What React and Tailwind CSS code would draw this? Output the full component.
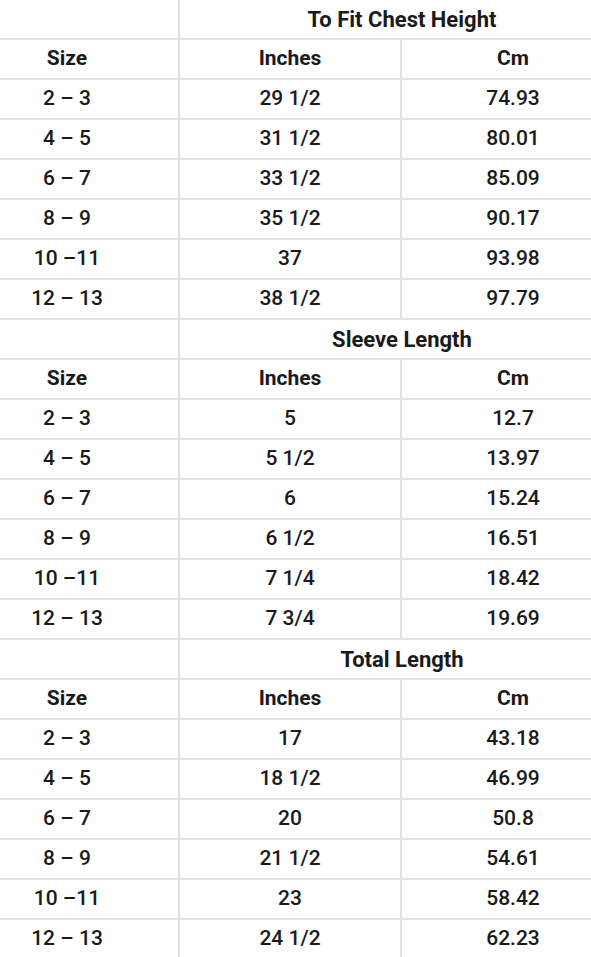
const sections = [
  {
    title: "To Fit Chest Height",
    rows: [
      ["2 – 3", "29 1/2", "74.93"],
      ["4 – 5", "31 1/2", "80.01"],
      ["6 – 7", "33 1/2", "85.09"],
      ["8 – 9", "35 1/2", "90.17"],
      ["10 –11", "37", "93.98"],
      ["12 – 13", "38 1/2", "97.79"],
    ],
  },
  {
    title: "Sleeve Length",
    rows: [
      ["2 – 3", "5", "12.7"],
      ["4 – 5", "5 1/2", "13.97"],
      ["6 – 7", "6", "15.24"],
      ["8 – 9", "6 1/2", "16.51"],
      ["10 –11", "7 1/4", "18.42"],
      ["12 – 13", "7 3/4", "19.69"],
    ],
  },
  {
    title: "Total Length",
    rows: [
      ["2 – 3", "17", "43.18"],
      ["4 – 5", "18 1/2", "46.99"],
      ["6 – 7", "20", "50.8"],
      ["8 – 9", "21 1/2", "54.61"],
      ["10 –11", "23", "58.42"],
      ["12 – 13", "24 1/2", "62.23"],
    ],
  },
];

function Row({ cells, bold }) {
  return (
    <div className={`flex h-[40px] border-b-2 border-[#e2e2e2] ${bold ? "font-bold text-[21px]" : "font-medium"}`}>
      <div className="w-[224px] shrink-0 border-r-2 border-[#e2e2e2] flex items-center justify-center">{cells[0]}</div>
      <div className="w-[222px] shrink-0 border-r-2 border-[#e2e2e2] flex items-center justify-center">{cells[1]}</div>
      <div className="w-[222px] shrink-0 flex items-center justify-center">{cells[2]}</div>
    </div>
  );
}

export default function App() {
  return (
    <div className="w-[591px] h-[957px] overflow-hidden bg-white text-[#1a1a1a] text-[21px]" style={{ fontFamily: "Roboto, 'Noto Sans', sans-serif" }}>
      <div className="ml-[-44px] w-[668px]">
        {sections.map((s) => (
          <div key={s.title}>
            {/* group title */}
            <div className="flex h-[40px] border-b-2 border-[#e2e2e2] font-bold text-[22px]">
              <div className="w-[224px] shrink-0 border-r-2 border-[#e2e2e2]" />
              <div className="w-[444px] shrink-0 flex items-center justify-center">{s.title}</div>
            </div>
            <Row cells={["Size", "Inches", "Cm"]} bold />
            {s.rows.map((r) => (
              <Row key={r[0]} cells={r} />
            ))}
          </div>
        ))}
      </div>
    </div>
  );
}
